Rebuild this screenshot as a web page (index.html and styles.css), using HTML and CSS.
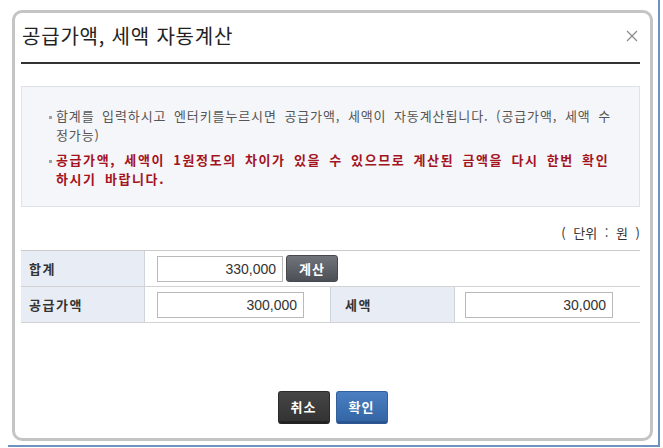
FILE: index.html
```html
<!DOCTYPE html>
<html lang="ko">
<head>
<meta charset="utf-8">
<title>공급가액, 세액 자동계산</title>
<link rel="stylesheet" href="styles.css">
</head>
<body>
<div class="page">
  <div class="dialog">
    <div class="dlg-head">
      <h1 class="dlg-title">공급가액, 세액 자동계산</h1>
      <button class="close" type="button" aria-label="닫기">
        <svg width="12" height="12" viewBox="0 0 12 12"><path d="M1 1 L11 11 M11 1 L1 11" stroke="#8a8a8a" stroke-width="1.2" fill="none"/></svg>
      </button>
    </div>
    <div class="notice">
      <ul>
        <li>합계를 입력하시고 엔터키를누르시면 공급가액, 세액이 자동계산됩니다. (공급가액, 세액 수정가능)</li>
        <li class="warn">공급가액, 세액이 1원정도의 차이가 있을 수 있으므로 계산된 금액을 다시 한번 확인하시기 바랍니다.</li>
      </ul>
    </div>
    <p class="unit">( 단위 : 원 )</p>
    <div class="calc">
      <div class="th">합계</div>
      <div class="td span3"><input class="num w-sum" type="text" value="330,000"><button class="btn-calc" type="button">계산</button></div>
      <div class="th">공급가액</div>
      <div class="td"><input class="num w-supply" type="text" value="300,000"></div>
      <div class="th th-mid">세액</div>
      <div class="td td-last"><input class="num w-tax" type="text" value="30,000"></div>
    </div>
    <div class="actions">
      <button class="btn btn-cancel" type="button">취소</button>
      <button class="btn btn-ok" type="button">확인</button>
    </div>
  </div>
</div>
</body>
</html>
```
FILE: styles.css
```css
* { box-sizing: border-box; }
html, body { margin: 0; padding: 0; background: #fff; }
body { font-family: "Noto Sans CJK KR", "Noto Sans", sans-serif; color: #333; }

.page {
  width: 652px;
  height: 447px;
  margin-left: 8px;
  padding: 10px 0 0 4px;
  border-right: 2px solid #6f93bf;
  border-bottom: 2px solid #6f93bf;
}

.dialog {
  width: 641px;
  height: 431px;
  border: 3px solid #c4c4c4;
  border-radius: 10px;
  background: #fff;
  padding: 0 10px 0 6px;
}

.dlg-head {
  height: 51px;
  display: flex;
  align-items: center;
  justify-content: space-between;
  border-bottom: 2px solid #333;
  padding: 0 0 3px 1px;
}
.dlg-title {
  margin: 0;
  font-size: 20px;
  font-weight: 400;
  letter-spacing: 0.8px;
  color: #222;
  line-height: 24px;
}
.close {
  border: 0;
  background: none;
  padding: 0;
  width: 12px;
  height: 12px;
  margin-right: 2px;
  display: flex;
}

.notice {
  margin-top: 22px;
  height: 121px;
  border: 1px solid #dfe2e8;
  background: #f5f6f9;
  padding: 19px 24px 0 27px;
}
.notice ul { margin: 0; padding: 0; list-style: none; }
.notice li {
  font-size: 13px;
  line-height: 19px;
  color: #555;
  word-spacing: 3px;
  letter-spacing: 0.9px;
  padding-left: 7px;
  text-indent: -7px;
}
.notice li::before {
  content: "";
  display: inline-block;
  width: 3px;
  height: 3px;
  background: #a0a0a0;
  margin-right: 4px;
  vertical-align: middle;
}
.notice li.warn {
  margin-top: 6px;
  color: #a3141f;
  font-weight: 700;
  letter-spacing: 1.6px;
}

.unit {
  margin: 17px 0 0;
  text-align: right;
  font-size: 13px;
  line-height: 18px;
  word-spacing: 4px;
  color: #333;
}

.calc {
  margin-top: 8px;
  display: grid;
  grid-template-columns: 124px 185px 125px 1fr;
  grid-auto-rows: 36px;
  border-top: 1px solid #cacaca;
}
.th, .td {
  display: flex;
  align-items: center;
  border-bottom: 1px solid #d2d2d2;
}
.th {
  background: #e8ecf4;
  border-right: 1px solid #cfd3da;
  padding-left: 8px;
  font-size: 13px;
  font-weight: 700;
  letter-spacing: 1.5px;
  color: #333;
}
.th-mid { border-left: 1px solid #cfd3da; padding-left: 14px; }
.td { padding-left: 12px; }
.td-last { padding-left: 10px; }
.span3 { grid-column: span 3; }

.num {
  height: 26px;
  border: 1px solid #b9b9b9;
  background: #fff;
  text-align: right;
  padding: 0 6px 0 4px;
  font-family: "Liberation Sans", Arial, sans-serif;
  font-size: 14px;
  color: #333;
  margin: 0;
}
.w-sum { width: 126px; }
.w-supply { width: 147px; }
.w-tax { width: 148px; }

.btn-calc {
  margin-left: 3px;
  width: 52px;
  height: 27px;
  border: 1px solid #45484d;
  border-radius: 3px;
  background: linear-gradient(#71747b, #4c4f55);
  color: #fff;
  font-family: "Noto Sans CJK KR", sans-serif;
  font-size: 13px;
  font-weight: 700;
  letter-spacing: 1px;
  padding: 0;
}

.actions {
  margin-top: 68px;
  display: flex;
  justify-content: center;
  gap: 6px;
  padding-left: 4px;
}
.btn {
  width: 52px;
  height: 33px;
  border-radius: 3px;
  color: #fff;
  font-family: "Noto Sans CJK KR", sans-serif;
  font-size: 13px;
  font-weight: 700;
  letter-spacing: 1px;
  padding: 0;
}
.btn-cancel {
  background: linear-gradient(#464646, #333);
  border: 1px solid #2b2b2b;
  border-bottom: 3px solid #222;
}
.btn-ok {
  background: linear-gradient(#4a7fc1, #3466a6);
  border: 1px solid #31609c;
  border-bottom: 3px solid #2a5590;
}
```
